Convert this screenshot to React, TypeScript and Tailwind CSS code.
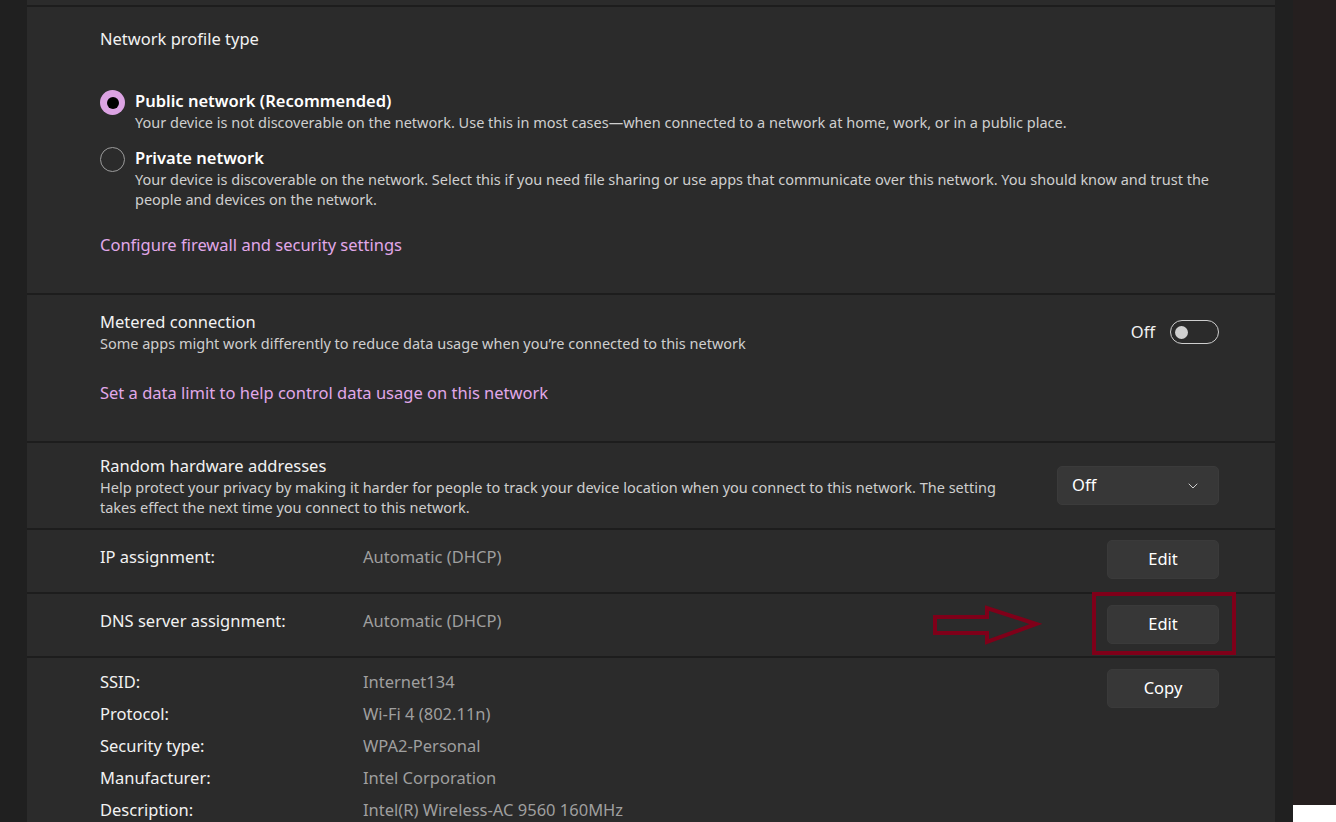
import React from "react";
import { ChevronDown } from "lucide-react";

const font = { fontFamily: '"Noto Sans", "Open Sans", sans-serif' };

const Separator = () => <div className="h-[2px] w-full shrink-0 bg-[#1d1d1d]" />;

const EditButton: React.FC<{ label: string }> = ({ label }) => (
  <button className="h-[39px] w-[112px] rounded-[5px] border border-[#3a3a3a] bg-[#373737] text-[16.5px] text-white">
    {label}
  </button>
);

const Radio: React.FC<{ checked?: boolean }> = ({ checked }) =>
  checked ? (
    <span className="flex h-[25px] w-[25px] shrink-0 items-center justify-center rounded-full bg-[#dca3e3]">
      <span className="h-[12px] w-[12px] rounded-full bg-black" />
    </span>
  ) : (
    <span className="h-[25px] w-[25px] shrink-0 rounded-full border-[1.5px] border-[#9b9b9b]" />
  );

const details = [
  ["SSID:", "Internet134"],
  ["Protocol:", "Wi-Fi 4 (802.11n)"],
  ["Security type:", "WPA2-Personal"],
  ["Manufacturer:", "Intel Corporation"],
  ["Description:", "Intel(R) Wireless-AC 9560 160MHz"],
];

export default function App() {
  return (
    <div className="flex h-[822px] w-full overflow-hidden bg-[#202020]" style={font}>
      <div className="w-[27px] shrink-0" />
      <div className="flex w-[1248px] shrink-0 flex-col overflow-hidden bg-[#2b2b2b]">
        <div className="h-[5px] shrink-0" />
        <Separator />

        {/* Network profile type */}
        <div className="flex h-[286px] shrink-0 flex-col pl-[73px] pt-[20px]">
          <div className="text-[16.5px] leading-[24px] text-[#f2f2f2]">Network profile type</div>
          <div className="mt-[39px] flex gap-[10px]">
            <Radio checked />
            <div>
              <div className="text-[16.5px] font-semibold leading-[22px] text-white">
                Public network (Recommended)
              </div>
              <div className="text-[14.5px] leading-[20px] text-[#cfcfcf]">
                Your device is not discoverable on the network. Use this in most cases—when connected to a network at
                home, work, or in a public place.
              </div>
            </div>
          </div>
          <div className="mt-[15px] flex gap-[10px]">
            <Radio />
            <div className="w-[1075px]">
              <div className="text-[16.5px] font-semibold leading-[22px] text-white">Private network</div>
              <div className="text-[14.5px] leading-[20px] text-[#cfcfcf]">
                Your device is discoverable on the network. Select this if you need file sharing or use apps that
                communicate over this network. You should know and trust the people and devices on the network.
              </div>
            </div>
          </div>
          <div className="mt-[25px] text-[16.5px] leading-[22px] text-[#e1a8e9]">
            Configure firewall and security settings
          </div>
        </div>
        <Separator />

        {/* Metered connection */}
        <div className="flex h-[146px] shrink-0 flex-col pl-[73px] pr-[56px] pt-[16px]">
          <div className="flex items-start justify-between">
            <div>
              <div className="text-[16.5px] leading-[22px] text-[#f2f2f2]">Metered connection</div>
              <div className="text-[14.5px] leading-[20px] text-[#cfcfcf]">
                Some apps might work differently to reduce data usage when you’re connected to this network
              </div>
            </div>
            <div className="mt-[9px] flex items-center gap-[15px]">
              <span className="text-[16.5px] text-[#f2f2f2]">Off</span>
              <span className="flex h-[24px] w-[49px] items-center rounded-full border border-[#cfcfcf] px-[4px]">
                <span className="h-[13px] w-[13px] rounded-full bg-[#d0d0d0]" />
              </span>
            </div>
          </div>
          <div className="mt-[29px] text-[16.5px] leading-[22px] text-[#e1a8e9]">
            Set a data limit to help control data usage on this network
          </div>
        </div>
        <Separator />

        {/* Random hardware addresses */}
        <div className="flex h-[85px] shrink-0 items-center justify-between pl-[73px] pr-[56px]">
          <div className="w-[910px]">
            <div className="text-[16.5px] leading-[22px] text-[#f2f2f2]">Random hardware addresses</div>
            <div className="text-[14.5px] leading-[20px] text-[#cfcfcf]">
              Help protect your privacy by making it harder for people to track your device location when you connect to
              this network. The setting takes effect the next time you connect to this network.
            </div>
          </div>
          <div className="flex h-[39px] w-[162px] items-center justify-between rounded-[5px] border border-[#3b3b3b] bg-[#373737] pl-[14px] pr-[17px]">
            <span className="text-[16.5px] text-white">Off</span>
            <ChevronDown className="h-[16px] w-[16px] text-[#cfcfcf]" strokeWidth={1.5} />
          </div>
        </div>
        <Separator />

        {/* IP assignment */}
        <div className="flex h-[62px] shrink-0 items-center pl-[73px] pr-[56px]">
          <div className="flex flex-1 pb-[8px]">
            <div className="w-[263px] text-[16.5px] text-[#f2f2f2]">IP assignment:</div>
            <div className="text-[16.5px] text-[#9f9f9f]">Automatic (DHCP)</div>
          </div>
          <div className="pb-[3px]">
            <EditButton label="Edit" />
          </div>
        </div>
        <Separator />

        {/* DNS server assignment */}
        <div className="relative flex h-[62px] shrink-0 items-center pl-[73px] pr-[56px]">
          <div className="flex flex-1 pb-[8px]">
            <div className="w-[263px] text-[16.5px] text-[#f2f2f2]">DNS server assignment:</div>
            <div className="text-[16.5px] text-[#9f9f9f]">Automatic (DHCP)</div>
          </div>
          <div className="pb-[2px]">
            <EditButton label="Edit" />
          </div>
          <div className="absolute left-[1065px] top-[-2px] h-[63px] w-[144px] border-[4.5px] border-[#7f0019]" />
          <svg className="absolute left-[903px] top-[9px]" width="112" height="44" viewBox="0 0 112 44">
            <polygon
              points="5,14 57,14 57,5 106,21 57,39 57,30 5,30"
              fill="none"
              stroke="#7f0019"
              strokeWidth="4"
              strokeLinejoin="miter"
            />
          </svg>
        </div>
        <Separator />

        {/* Properties */}
        <div className="flex shrink-0 pl-[73px] pr-[56px] pt-[8px]">
          <div className="flex-1">
            {details.map(([k, v]) => (
              <div key={k} className="flex h-[32px] items-center">
                <div className="w-[263px] text-[16.5px] text-[#f2f2f2]">{k}</div>
                <div className="text-[16.5px] text-[#9f9f9f]">{v}</div>
              </div>
            ))}
          </div>
          <div className="pt-[3px]">
            <EditButton label="Copy" />
          </div>
        </div>
      </div>
      <div className="w-[18px] shrink-0 bg-[#202020]" />
      <div className="flex flex-1 flex-col bg-[#251f1f]">
        <div className="flex-1" />
        <div className="h-[17px] bg-white" />
      </div>
    </div>
  );
}
